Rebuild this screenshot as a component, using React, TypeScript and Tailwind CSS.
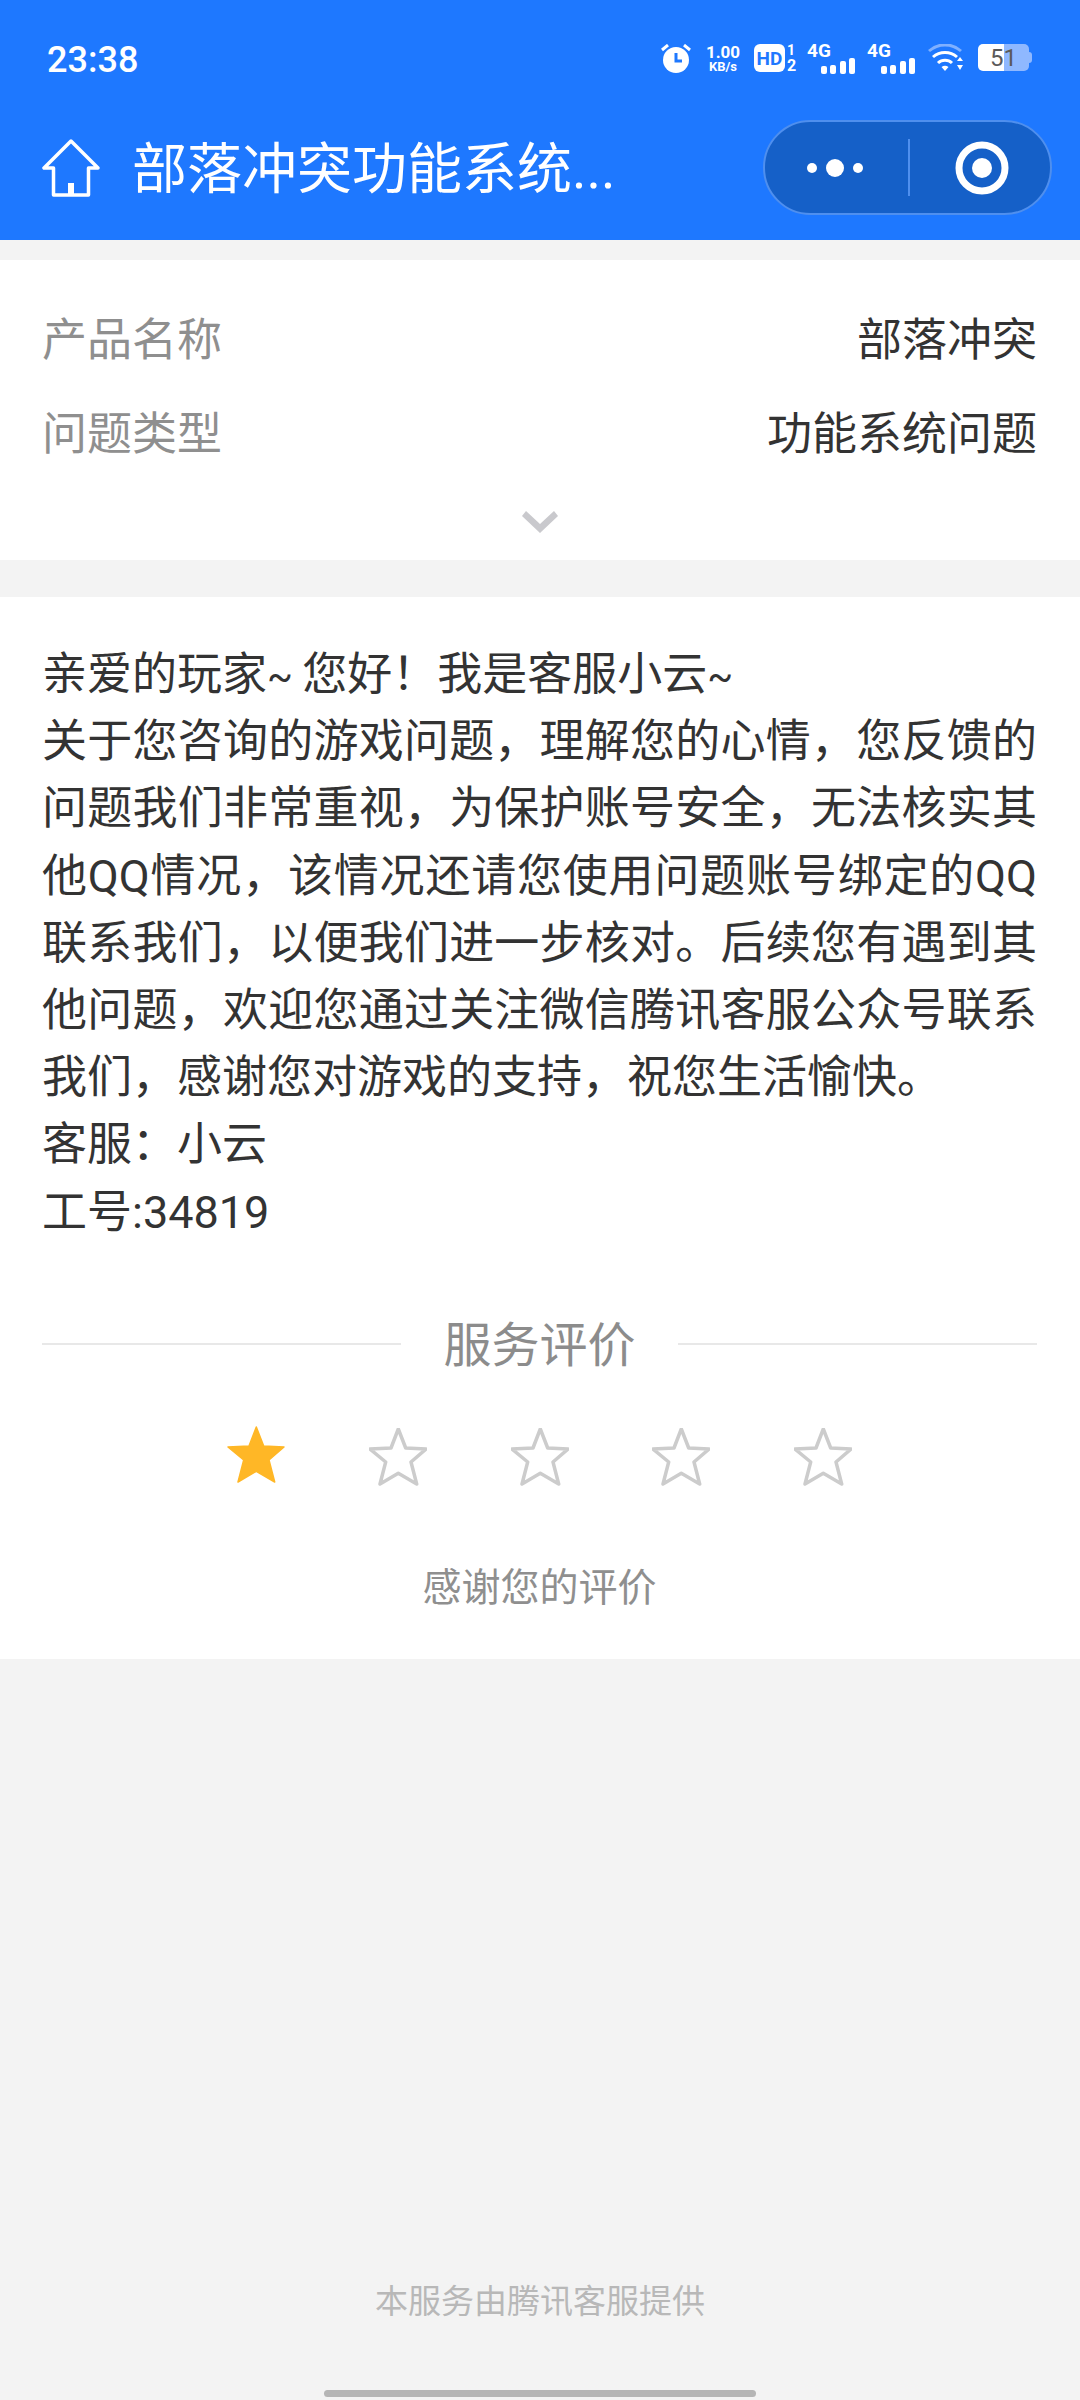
const font = "font-['Roboto','Noto_Sans_CJK_SC',sans-serif]";

const Signal = () => (
  <div className="flex flex-col w-[48px] h-[29px]">
    <span className="text-[19px] leading-[14px] font-bold text-white w-[26px]">4G</span>
    <div className="flex items-end justify-end gap-[3.5px] h-[16px]">
      <div className="w-[6px] h-[8px] bg-white rounded-[2px]" />
      <div className="w-[6px] h-[9px] bg-white rounded-[2px]" />
      <div className="w-[6px] h-[13px] bg-white rounded-[2px]" />
      <div className="w-[6px] h-[16px] bg-white rounded-[2px]" />
    </div>
  </div>
);

const StatusBar = () => (
  <div className="h-[90px] flex justify-between pl-[47px] pr-[48px] pt-[38px]">
    <span className="text-[36px] leading-[44px] font-medium text-white">23:38</span>
    <div className="flex items-start h-[29px] mt-[6px]">
      <svg width="30" height="29" viewBox="0 0 30 29" className="mr-[14px]">
        <circle cx="15" cy="16" r="13" fill="#fff" />
        <path d="M15 9v8h6" fill="none" stroke="#1e78ff" strokeWidth="3" />
        <path d="M1 6l6-5M29 6l-6-5" stroke="#fff" strokeWidth="3" />
      </svg>
      <div className="flex flex-col items-center w-[36px] mr-[13px] font-bold text-white">
        <span className="text-[17px] leading-[16px]">1.00</span>
        <span className="text-[13px] leading-[13px]">KB/s</span>
      </div>
      <div className="w-[31px] h-[28px] rounded-[6px] bg-white flex items-center justify-center text-[19px] font-bold text-[#1e78ff] leading-none">
        HD
      </div>
      <div className="flex flex-col gap-[2px] w-[22px] pl-[2px] font-bold text-white text-[14px] leading-[13px]">
        <span>1</span>
        <span className="text-[16px] leading-[14px]">2</span>
      </div>
      <Signal />
      <div className="w-[12px]" />
      <Signal />
      <svg width="36" height="28" viewBox="0 0 36 28" className="ml-[13px] mr-[14px]">
        <path d="M1 7a24 24 0 0 1 32 0" fill="none" stroke="#7fb0ff" strokeWidth="3" />
        <path d="M5 13a18 18 0 0 1 24 0" fill="none" stroke="#fff" strokeWidth="3" />
        <path d="M10 19a10 10 0 0 1 14 0" fill="none" stroke="#fff" strokeWidth="3" />
        <path d="M13.5 23a6 6 0 0 1 7 0l-3.5 4z" fill="#fff" />
        <path d="M29 17l3-4 3 4zM29 21h6l-3 5z" fill="#fff" />
      </svg>
      <div className="flex items-center">
        <div className="w-[51px] h-[27px] rounded-[5px] bg-[linear-gradient(90deg,#ffffff_51%,#8fb8ff_51%)] flex items-center justify-center text-[24px] leading-none text-[#5a5a5a]">
          51
        </div>
        <div className="w-[3px] h-[11px] rounded-r-[3px] bg-[#8fb8ff]" />
      </div>
    </div>
  </div>
);

const NavBar = () => (
  <div className="h-[150px] flex items-center pl-[42px] pr-[28px] pt-[5px]">
    <svg width="58" height="58" viewBox="0 0 58 58" fill="none" stroke="#fff" strokeWidth="3.5" strokeLinejoin="round" className="shrink-0">
      <path d="M29 2 2 29h9.5v27h35V29H56z" />
      <path d="M29 44v12" strokeWidth="6" />
    </svg>
    <div className="ml-[32px] mt-[2px] text-[55px] leading-[70px] text-white whitespace-nowrap">部落冲突功能系统...</div>
    <div className="ml-auto w-[289px] h-[95px] rounded-full bg-[#1560c8] border-2 border-[#4f8fee] flex items-center shrink-0">
      <div className="w-[143px] flex justify-center">
        <svg width="60" height="20" viewBox="0 0 60 20">
          <circle cx="5" cy="10" r="5" fill="#fff" />
          <circle cx="28" cy="10" r="9" fill="#fff" />
          <circle cx="51" cy="10" r="5" fill="#fff" />
        </svg>
      </div>
      <div className="w-[2px] h-[57px] bg-[#4f8fee]" />
      <div className="flex-1 flex justify-center pl-[4px]">
        <svg width="54" height="54" viewBox="0 0 54 54">
          <circle cx="27" cy="27" r="23" fill="none" stroke="#fff" strokeWidth="7" />
          <circle cx="27" cy="27" r="10" fill="#fff" />
        </svg>
      </div>
    </div>
  </div>
);

const Star = ({ on }: { on?: boolean }) => (
  <svg width="58" height="58" viewBox="-1 -1 58 58" className={on ? "-mt-[2px]" : ""}>
    <path
      d="M28.3 0 35.7 19 56 20 41 33 46.7 55 28.3 44.3 10 55 15.7 33 0 20 21 19Z"
      fill={on ? "#ffb726" : "#fff"}
      stroke={on ? "#ffb726" : "#cccccc"}
      strokeWidth={on ? 1.5 : 3.5}
      strokeLinejoin="round"
    />
  </svg>
);

export default function App() {
  return (
    <div className={`${font} w-[1080px] h-[2400px] bg-[#f3f3f3] flex flex-col`}>
      <div className="bg-[#1e78ff] h-[240px] shrink-0">
        <StatusBar />
        <NavBar />
      </div>

      <div className="mt-[20px] h-[300px] bg-white pl-[42px] pr-[43px] pt-[34px] flex flex-col text-[45px] leading-[94px]">
        <div className="flex justify-between">
          <span className="text-[#8f8f8f]">产品名称</span>
          <span className="text-[#333333]">部落冲突</span>
        </div>
        <div className="flex justify-between">
          <span className="text-[#8f8f8f]">问题类型</span>
          <span className="text-[#333333]">功能系统问题</span>
        </div>
        <div className="flex justify-center mt-[29px]">
          <svg width="36" height="22" viewBox="0 0 36 22">
            <polygon points="0,5 4,0 18,13 32,0 36,5 18,22" fill="#c9c9cd" />
          </svg>
        </div>
      </div>

      <div className="mt-[37px] h-[1062px] bg-white pl-[42px] pr-[43px] pt-[44px]">
        <div className="text-[45px] leading-[67.2px] text-[#333333] text-justify">
          <p>
            亲爱的玩家<span className="text-[38px] leading-none">~ </span>您好！我是客服小云<span className="text-[38px] leading-none">~</span>
          </p>
          <p>关于您咨询的游戏问题，理解您的心情，您反馈的问题我们非常重视，为保护账号安全，无法核实其他QQ情况，该情况还请您使用问题账号绑定的QQ联系我们，以便我们进一步核对。后续您有遇到其他问题，欢迎您通过关注微信腾讯客服公众号联系我们，感谢您对游戏的支持，祝您生活愉快。</p>
          <p>客服：小云</p>
          <p>工号:34819</p>
        </div>

        <div className="flex items-center justify-between mt-[67px]">
          <div className="w-[359px] h-[2px] bg-[#e8e8e8] -mt-[4px]" />
          <span className="text-[48px] leading-[66px] text-[#8c8c8c]">服务评价</span>
          <div className="w-[359px] h-[2px] bg-[#e8e8e8] -mt-[4px]" />
        </div>

        <div className="flex justify-center gap-[83.7px] mt-[49px]">
          <Star on />
          <Star />
          <Star />
          <Star />
          <Star />
        </div>

        <p className="text-center text-[39px] leading-[54px] text-[#8f8f8f] mt-[75px]">感谢您的评价</p>
      </div>

      <div className="mt-auto flex flex-col items-center">
        <p className="text-[33px] leading-[50px] text-[#b8b8b8]">本服务由腾讯客服提供</p>
        <div className="w-[432px] h-[7px] rounded-full bg-[#b5b5b5] mt-[63px] mb-[3px]" />
      </div>
    </div>
  );
}
